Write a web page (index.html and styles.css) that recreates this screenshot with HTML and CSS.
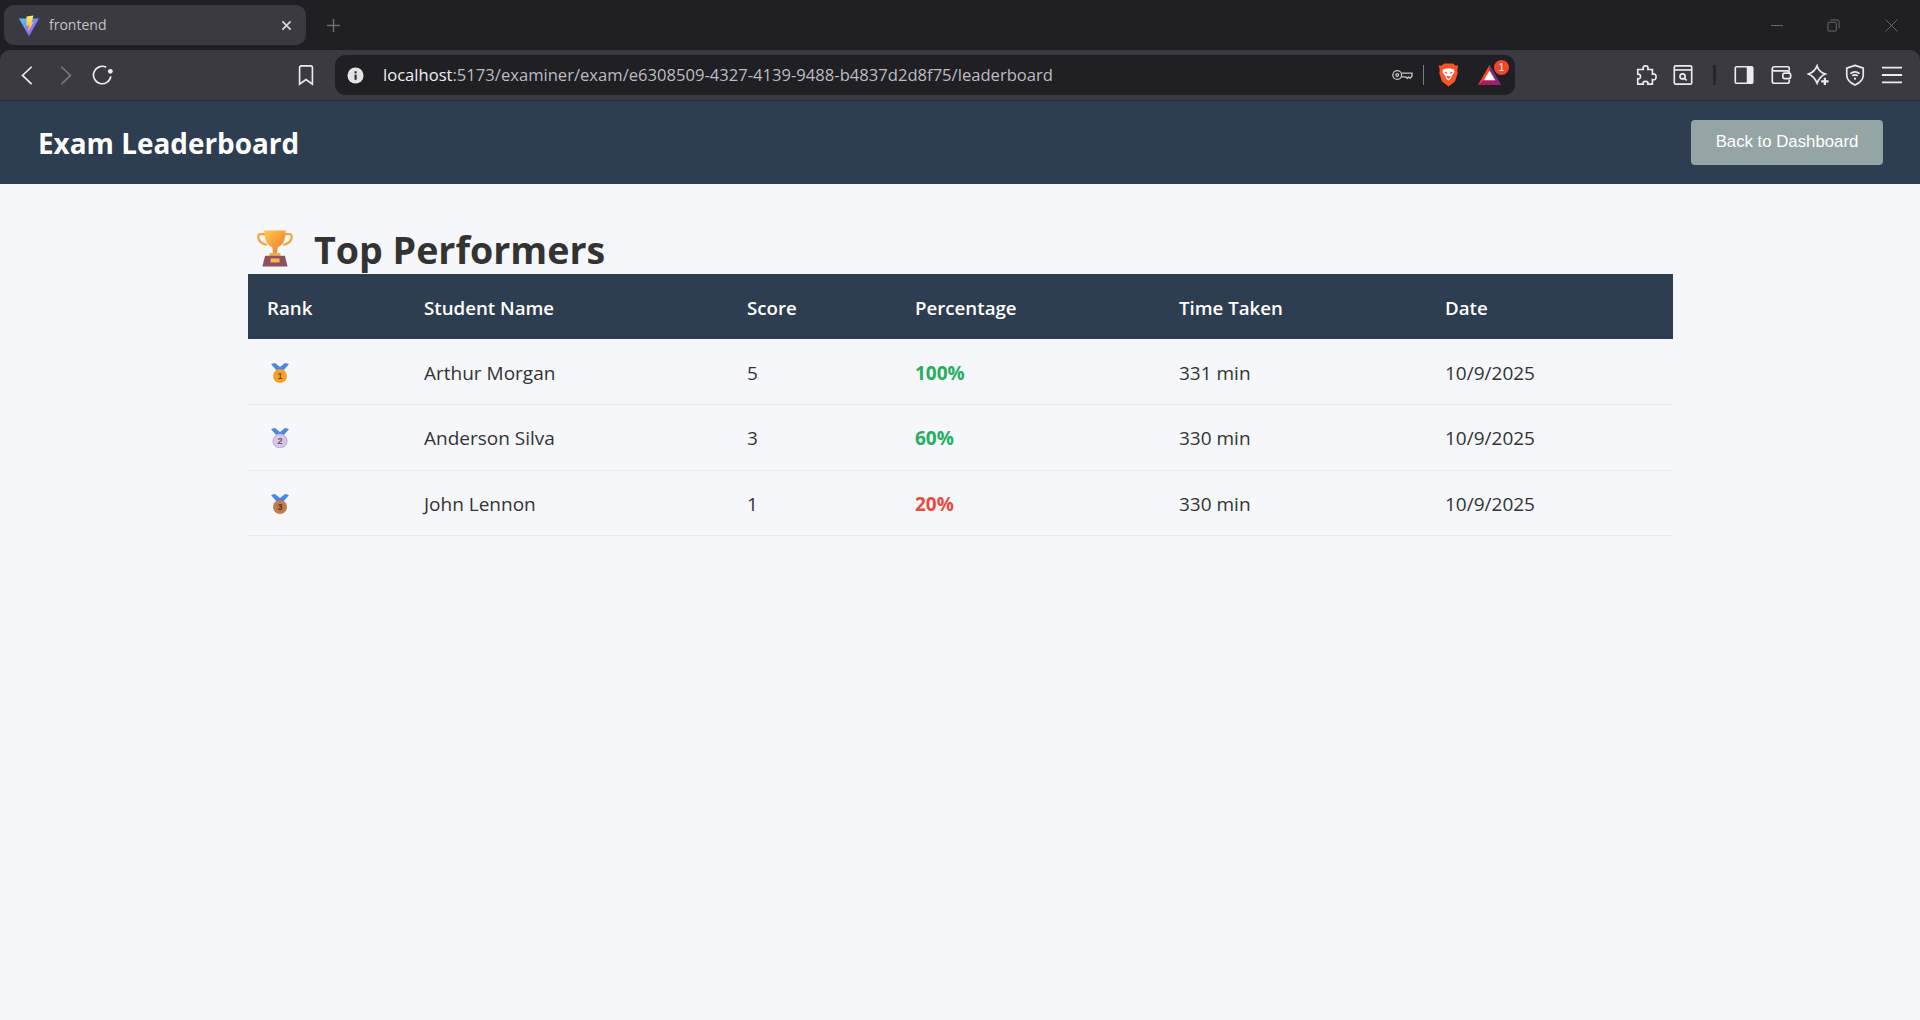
FILE: index.html
```html
<!DOCTYPE html>
<html lang="en">
<head>
  <meta charset="UTF-8" />
  <title>frontend</title>
  <link rel="stylesheet" href="styles.css">
</head>
<body>

<div class="chrome">
<!-- Browser tab strip -->
<div class="tabstrip">
  <div class="tab">
    <svg class="favicon" viewBox="0 0 20 20">
      <defs>
        <linearGradient id="viteA" x1="0" y1="0" x2="1" y2="1"><stop offset="0" stop-color="#41d1ff"/><stop offset="1" stop-color="#bd34fe"/></linearGradient>
        <linearGradient id="viteB" x1="0" y1="0" x2="0" y2="1"><stop offset="0" stop-color="#ffea83"/><stop offset="1" stop-color="#ffa800"/></linearGradient>
      </defs>
      <path d="M0 3 L20 3 L10.5 20 Q10 20.5 9.5 20 Z" fill="url(#viteA)"/>
      <path d="M7.5 1 L14.5 0 L12.5 7 L14.5 6.5 L9 17 L9.8 10 L7.5 10.5 Z" fill="url(#viteB)"/>
    </svg>
    <span class="tab-title">frontend</span>
    <svg class="tab-close" viewBox="0 0 12 12"><path d="M1.5 1.5 L10.5 10.5 M10.5 1.5 L1.5 10.5"/></svg>
  </div>
  <svg class="new-tab" viewBox="0 0 14 14"><path d="M7 0 V14 M0 7 H14"/></svg>
  <div class="win-controls">
    <svg viewBox="0 0 14 14"><path d="M0 7 H13"/></svg>
    <svg viewBox="0 0 14 14"><path d="M1 4.5 Q1 3.5 2 3.5 H9 Q10 3.5 10 4.5 V12 Q10 13 9 13 H2 Q1 13 1 12 Z M3.5 1 H11 Q13 1 13 3 V10"/></svg>
    <svg class="win-close" viewBox="0 0 14 14"><path d="M0.5 0.5 L13.5 13.5 M13.5 0.5 L0.5 13.5"/></svg>
  </div>
</div>

<!-- Browser toolbar -->
<div class="toolbar">
  <svg class="tb-icon back" viewBox="0 0 24 24"><path d="M16 3 L6 12.5 L16 22"/></svg>
  <svg class="tb-icon fwd" viewBox="0 0 24 24"><path d="M8 3 L18 12.5 L8 22"/></svg>
  <svg class="tb-icon reload" viewBox="0 0 24 24"><path d="M20.5 13.5 A9.5 9.5 0 1 1 15.5 3.6"/><circle cx="20" cy="8" r="2.6" class="solid"/></svg>
  <svg class="tb-icon bookmark" viewBox="0 0 24 24"><path d="M5 4 Q5 2 7 2 H17 Q19 2 19 4 V22 L12 17 L5 22 Z"/></svg>
  <div class="urlbar">
    <svg class="info" viewBox="0 0 18 18"><circle cx="9" cy="9" r="8.5" fill="#e4e4e8"/><rect x="8" y="8" width="2.2" height="5.5" fill="#26262b"/><rect x="8" y="4.5" width="2.2" height="2.2" fill="#26262b"/></svg>
    <div class="url"><span class="host">localhost</span>:5173/examiner/exam/e6308509-4327-4139-9488-b4837d2d8f75/leaderboard</div>
    <svg class="key" viewBox="0 0 22 12"><circle cx="5.5" cy="6" r="4.6"/><circle cx="5.5" cy="6" r="1.4"/><path d="M10 4 H21 V7 L19 9.5 L17.5 8 L16 9.5 L14.5 8 H10"/></svg>
    <span class="url-sep"></span>
    <svg class="lion" viewBox="0 0 22 26">
      <path d="M6 0.5 H16 L18.5 3 L21.5 2.5 L20.5 8 L21 11 L18 20 L11 25.5 L4 20 L1 11 L1.5 8 L0.5 2.5 L3.5 3 Z" fill="#fb542b"/>
      <path d="M5 7 L9 6 H13 L17 7 L17.5 10 L14.5 14 L13.5 17 L11 19 L8.5 17 L7.5 14 L4.5 10 Z" fill="#fff"/>
      <path d="M7 10 L9.5 11 M15 10 L12.5 11 M9.5 15 H12.5 L11 16.5 Z" stroke="#fb542b" stroke-width="1.2" fill="#fb542b"/>
    </svg>
    <div class="bat">
      <svg viewBox="0 0 24 22">
        <path d="M12 0 L24 21 L0 21 Z" fill="#ff4724"/>
        <path d="M0 21 L24 21 L18.5 16 H5.5 Z" fill="#9e1f63"/>
        <path d="M12 0 L24 21 L18.5 16 L12 5 Z" fill="#662d91"/>
        <path d="M12 6 L18 16 H6 Z" fill="#fff"/>
      </svg>
      <span class="bat-count">1</span>
    </div>
  </div>
  <div class="tb-right">
    <svg class="tb-icon puzzle" viewBox="0 0 24 24"><path d="M9 6 Q8 2 11.5 2 Q15 2 14 6 H19 V11 Q23 10 23 14 Q23 18 19 17 V22 H14 Q15 19 11.5 19 Q8 19 9 22 H3 V16 Q6 16.5 6 13.5 Q6 11 3 11 L3 6 Z"/></svg>
    <svg class="tb-icon" viewBox="0 0 24 24"><rect x="2.5" y="2" width="19" height="20" rx="1.5"/><path d="M2.5 6.5 H21.5"/><circle cx="11.5" cy="13.5" r="2.8"/><path d="M13.5 15.5 L16 18"/></svg>
    <span class="tb-sep"></span>
    <svg class="tb-icon" viewBox="0 0 24 24"><rect x="2.5" y="3" width="19" height="18" rx="1.5"/><rect x="15" y="3" width="6.5" height="18" class="solid"/></svg>
    <svg class="tb-icon" viewBox="0 0 24 24"><path d="M21 7 V5 Q21 3 19 3 H5 Q2.5 3 2.5 5.5 V19 Q2.5 21 5 21 H19 Q21 21 21 19 V17"/><path d="M2.5 6 Q2.5 7.5 5 7.5 H19 Q21 7.5 21 9 V10"/><rect x="14" y="10" width="8.5" height="6" rx="2"/></svg>
    <svg class="tb-icon" viewBox="0 0 24 24"><path d="M11 2 Q12.5 8.5 20 11 Q14 13.5 11 21 Q8 13.5 1.5 11 Q8.5 8.5 11 2 Z"/><path d="M19.5 15 V23 M15.5 19 H23.5" stroke-width="2.4"/></svg>
    <svg class="tb-icon" viewBox="0 0 24 24"><path d="M12 1.5 L21 4.5 V12 Q21 19 12 23 Q3 19 3 12 V4.5 Z"/><path d="M7 10.5 Q12 6.5 17 10.5 M9 13 Q12 10.8 15 13"/><circle cx="12" cy="16" r="1.2" class="solid"/></svg>
    <svg class="tb-icon burger" viewBox="0 0 24 24"><path d="M1 4 H23 M1 12 H23 M1 20 H23"/></svg>
  </div>
</div>
</div>

<!-- Page -->
<header class="page-header">
  <h1>Exam Leaderboard</h1>
  <button class="back-btn">Back to Dashboard</button>
</header>

<main class="content">
  <h2 class="section-title">
    <svg class="trophy" viewBox="0 0 40 42">
      <defs>
        <linearGradient id="cup" x1="0" y1="0" x2="1" y2="1"><stop offset="0" stop-color="#ffc94d"/><stop offset="1" stop-color="#e8772e"/></linearGradient>
      </defs>
      <path d="M9 5 H4 Q1 5 1.5 9 Q2.5 15 11 17 M31 5 H36 Q39 5 38.5 9 Q37.5 15 29 17" fill="none" stroke="#f5a83a" stroke-width="2.6"/>
      <path d="M8 1 H32 Q32 16 23 20 L22 27 H18 L17 20 Q8 16 8 1 Z" fill="url(#cup)"/>
      <rect x="14" y="26" width="12" height="3.5" fill="#f0b23e"/>
      <path d="M9 29 H31 L34 41 H6 Z" fill="#8e4f63"/>
      <rect x="15" y="32" width="10" height="4.5" fill="#f6b84c"/>
    </svg>
    <span>Top Performers</span>
  </h2>

  <table class="board">
    <thead>
      <tr>
        <th class="col-rank">Rank</th>
        <th class="col-name">Student Name</th>
        <th class="col-score">Score</th>
        <th class="col-pct">Percentage</th>
        <th class="col-time">Time Taken</th>
        <th class="col-date">Date</th>
      </tr>
    </thead>
    <tbody>
      <tr>
        <td>
          <svg class="medal gold" viewBox="0 0 18 20"><path d="M0 1 L4 0 L9 4 L14 0 L18 1 L12 8 H6 Z" class="ribbon"/><circle cx="9" cy="13" r="7"/><text x="9" y="16" text-anchor="middle">1</text></svg>
        </td>
        <td>Arthur Morgan</td>
        <td>5</td>
        <td class="pct pass">100%</td>
        <td>331 min</td>
        <td>10/9/2025</td>
      </tr>
      <tr>
        <td>
          <svg class="medal silver" viewBox="0 0 18 20"><path d="M0 1 L4 0 L9 4 L14 0 L18 1 L12 8 H6 Z" class="ribbon"/><circle cx="9" cy="13" r="7"/><text x="9" y="16" text-anchor="middle">2</text></svg>
        </td>
        <td>Anderson Silva</td>
        <td>3</td>
        <td class="pct pass">60%</td>
        <td>330 min</td>
        <td>10/9/2025</td>
      </tr>
      <tr>
        <td>
          <svg class="medal bronze" viewBox="0 0 18 20"><path d="M0 1 L4 0 L9 4 L14 0 L18 1 L12 8 H6 Z" class="ribbon"/><circle cx="9" cy="13" r="7"/><text x="9" y="16" text-anchor="middle">3</text></svg>
        </td>
        <td>John Lennon</td>
        <td>1</td>
        <td class="pct fail">20%</td>
        <td>330 min</td>
        <td>10/9/2025</td>
      </tr>
    </tbody>
  </table>
</main>

</body>
</html>
```

FILE: styles.css
```css
* { box-sizing: border-box; }
html, body { height: 100%; }
body {
  margin: 0;
  font-family: "Open Sans", "Noto Sans", sans-serif;
  background: #f5f7fa;
  color: #333;
  display: flex;
  flex-direction: column;
  overflow: hidden;
}

/* browser chrome */
.chrome { flex: none; background: #1f1f24; }
.tabstrip {
  height: 50px;
  display: flex; align-items: center;
  padding-left: 4px;
}
.tab {
  width: 302px; height: 40px;
  background: #3a3a40; border-radius: 10px;
  display: flex; align-items: center;
  padding: 0 14px 0 15px;
}
.favicon { width: 20px; height: 21px; flex: none; }
.tab-title {
  margin: 0 0 2px 10px; flex: 1;
  font-family: "Open Sans", sans-serif;
  font-size: 14px; color: #c4c4c8;
}
.tab-close { width: 11px; height: 11px; fill: none; stroke: #d8d8dc; stroke-width: 1.8; }
.new-tab { width: 13px; height: 13px; margin-left: 21px; fill: none; stroke: #6c6c72; stroke-width: 1.6; }
.win-controls {
  margin-left: auto; display: flex; align-items: center; gap: 43px;
  padding-right: 22px;
}
.win-controls svg { width: 13px; height: 13px; fill: none; stroke: #6e6e74; stroke-width: 1; }
.win-controls .win-close { margin-left: 2px; }

.toolbar {
  height: 51px;
  background: #3a3a40;
  border-radius: 10px 10px 0 0;
  border-bottom: 1px solid #2a2a2e;
  display: flex; align-items: center;
  padding: 0 17px 0 0;
}
.tb-icon { width: 22px; height: 22px; flex: none; fill: none; stroke: #ececf0; stroke-width: 1.8; }
.tb-icon .solid { fill: #ececf0; stroke: none; }
.back { margin-left: 17px; }
.fwd { margin-left: 15px; stroke: #77777c; }
.reload { margin-left: 16px; }
.bookmark { margin-left: 181px; }
.urlbar {
  width: 1180px; height: 40px; margin-left: 18px;
  background: #1f1f24; border-radius: 10px;
  display: flex; align-items: center;
  padding-left: 12px;
}
.info { width: 17px; height: 17px; flex: none; }
.url {
  margin: 0 0 2px 19px; flex: 1;
  font-size: 16.6px; color: #bcbcc1;
  white-space: nowrap;
}
.host { color: #f0f0f2; }
.key { width: 21px; height: 12px; fill: none; stroke: #c4c4c8; stroke-width: 1.4; flex: none; }
.url-sep { width: 1px; height: 20px; background: #7a7a80; margin: 0 14px 0 10px; }
.lion { width: 21px; height: 24px; flex: none; }
.bat { position: relative; width: 23px; height: 21px; margin: 0 14px 0 19px; flex: none; }
.bat svg { display: block; width: 23px; height: 21px; }
.bat-count {
  position: absolute; top: -5px; right: -8px;
  width: 15px; height: 15px; border-radius: 50%;
  background: #f4462c; color: #fff;
  font-family: "Liberation Sans", sans-serif;
  font-size: 10px; line-height: 15px; text-align: center;
}
.tb-right { display: flex; align-items: center; margin-left: auto; gap: 15px; }
.tb-sep { width: 3px; height: 20px; background: #26262b; border-radius: 1px; margin: 0 2px 0 4px; }
.burger { stroke-width: 2; }

/* page */
.page-header {
  height: 83px; flex: none;
  background: #2c3e50;
  display: flex; align-items: center; justify-content: space-between;
  padding: 0 37px 0 38px;
}
.page-header h1 { margin: 0; font-size: 27.9px; font-weight: 700; color: #fff; }
.back-btn {
  width: 192px; height: 45px;
  background: #95a5a6; color: #fff;
  border: none; border-radius: 4px;
  font-family: "Liberation Sans", sans-serif; font-size: 16.8px;
  padding-bottom: 2px;
  cursor: pointer;
}
.content { padding: 40px 247px 0 248px; }
.section-title {
  display: flex; align-items: center; gap: 21px;
  margin: 0; height: 50px;
  font-size: 37.6px; font-weight: 700; color: #333;
  padding-left: 9px;
}
.trophy { width: 36px; height: 41px; flex: none; margin-bottom: 2px; }
.board { width: 100%; border-collapse: collapse; table-layout: fixed; }
.board th {
  background: #2c3e50; color: #fff;
  font-size: 18.7px; font-weight: 600; text-align: left;
  height: 65px; padding: 2px 19px 0;
}
.board td {
  height: 65.5px; padding: 2px 19px 0;
  font-size: 19px; color: #333;
  border-bottom: 1px solid #e8eaee;
}
.col-rank { width: 157px; }
.col-name { width: 323px; }
.col-score { width: 168px; }
.col-pct { width: 264px; }
.col-time { width: 266px; }
.board .pct { font-weight: 700; }
.board .pass { color: #27ae60; }
.board .fail { color: #e74c3c; }
.medal { display: block; width: 18px; height: 20px; margin-left: 4px; }
.medal .ribbon { fill: #4a86e8; }
.medal text { font-family: "Liberation Sans", sans-serif; font-size: 9px; font-weight: 700; }
.gold circle { fill: #f7a029; }
.gold text { fill: #7a4a2a; }
.silver circle { fill: #d5c6e8; stroke: #b9a8d6; }
.silver text { fill: #5d5570; }
.bronze circle { fill: #c17a4a; }
.bronze text { fill: #5f2f22; }
```
